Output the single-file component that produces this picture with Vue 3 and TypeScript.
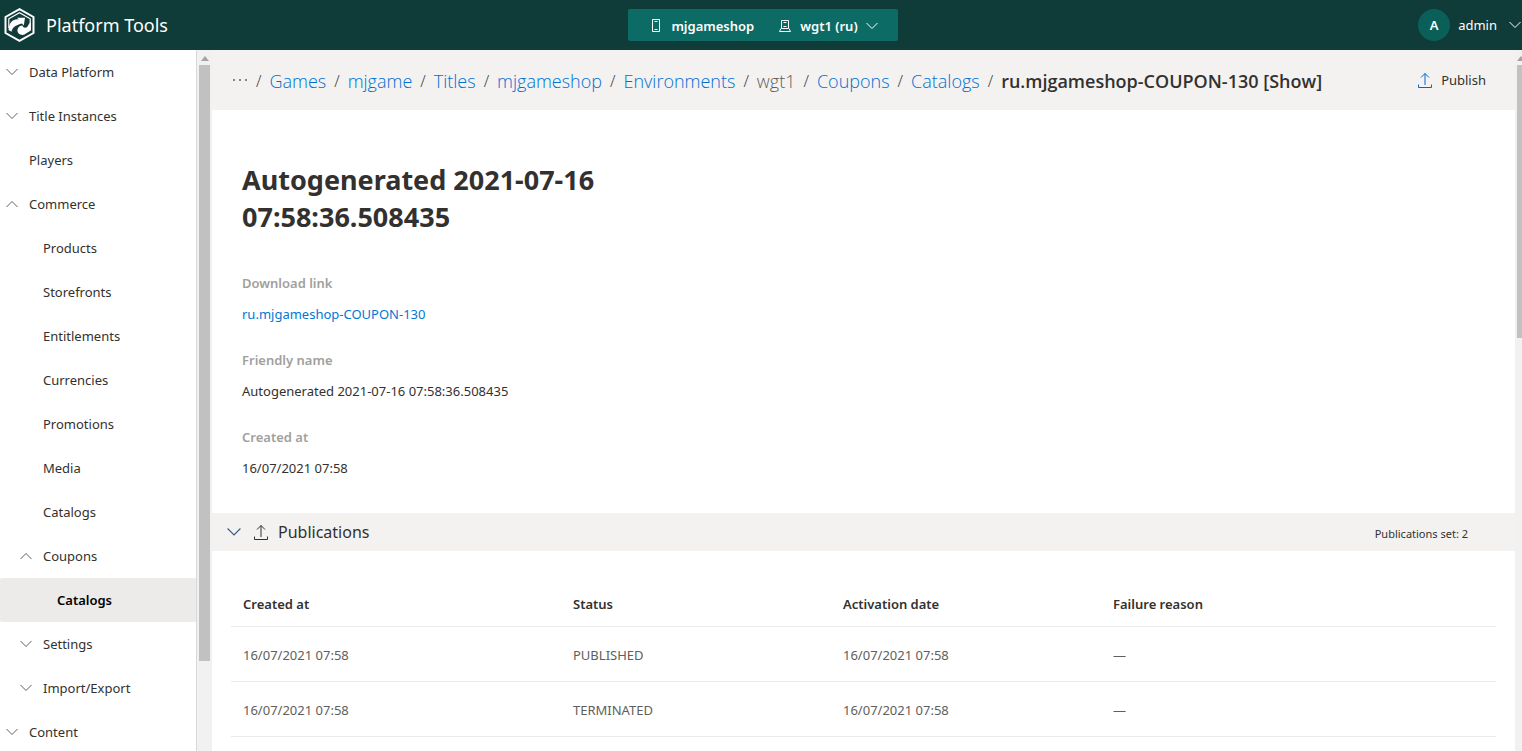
<script setup lang="ts">
interface NavItem { label: string; level: number; icon?: 'down' | 'up'; active?: boolean }
interface Crumb { label: string; kind: 'link' | 'muted' | 'current' }
interface Publication { created: string; status: string; activation: string; failure: string }

const nav: NavItem[] = [
  { label: 'Data Platform', level: 0, icon: 'down' },
  { label: 'Title Instances', level: 0, icon: 'down' },
  { label: 'Players', level: 0 },
  { label: 'Commerce', level: 0, icon: 'up' },
  { label: 'Products', level: 1 },
  { label: 'Storefronts', level: 1 },
  { label: 'Entitlements', level: 1 },
  { label: 'Currencies', level: 1 },
  { label: 'Promotions', level: 1 },
  { label: 'Media', level: 1 },
  { label: 'Catalogs', level: 1 },
  { label: 'Coupons', level: 1, icon: 'up' },
  { label: 'Catalogs', level: 2, active: true },
  { label: 'Settings', level: 1, icon: 'down' },
  { label: 'Import/Export', level: 1, icon: 'down' },
  { label: 'Content', level: 0, icon: 'down' },
]

const crumbs: Crumb[] = [
  { label: 'Games', kind: 'link' },
  { label: 'mjgame', kind: 'link' },
  { label: 'Titles', kind: 'link' },
  { label: 'mjgameshop', kind: 'link' },
  { label: 'Environments', kind: 'link' },
  { label: 'wgt1', kind: 'muted' },
  { label: 'Coupons', kind: 'link' },
  { label: 'Catalogs', kind: 'link' },
  { label: 'ru.mjgameshop-COUPON-130 [Show]', kind: 'current' },
]

const fields = [
  { label: 'Download link', value: 'ru.mjgameshop-COUPON-130', link: true },
  { label: 'Friendly name', value: 'Autogenerated 2021-07-16 07:58:36.508435', link: false },
  { label: 'Created at', value: '16/07/2021 07:58', link: false },
]

const columns = ['Created at', 'Status', 'Activation date', 'Failure reason']
const publications: Publication[] = [
  { created: '16/07/2021 07:58', status: 'PUBLISHED', activation: '16/07/2021 07:58', failure: '—' },
  { created: '16/07/2021 07:58', status: 'TERMINATED', activation: '16/07/2021 07:58', failure: '—' },
]
</script>

<template>
  <div class="shell">
    <header class="topbar">
      <div class="brand">
        <svg class="logo" viewBox="0 0 32 34" aria-hidden="true">
          <path d="M15.500 1.200 29.500 9v16L15.500 32.800 1.500 25V9Z" fill="none" stroke="#fff" stroke-width="2" />
          <path d="M4.800 20V10.800L15.500 4.800 26.200 10.800V22" fill="none" stroke="#fff" stroke-width="1.200" />
          <path d="M4.500 22C5 14.500 9.500 10.500 15 11.500L13 9.800 21 9.800 19.800 17.500 18 15.500C12.500 17 8.500 18.500 7.500 23.800Z" fill="#fff" />
          <path d="M26.800 14V22.500L20 26.800C15.500 27.500 13 24.500 13.500 21.500 14 19 16.500 17.500 18.500 17.500 19 20 22 20.500 23.500 18.500 24.500 17 25 15.500 26.800 14Z" fill="#fff" />
        </svg>
        <span class="brand-name">Platform Tools</span>
      </div>
      <button type="button" class="context">
        <svg class="ctx-icon" viewBox="0 0 14 14" aria-hidden="true">
          <path d="M3.500.5h7v12h-7zM5.500 2.500h3M5.500 10.500h3" fill="none" stroke="currentColor" />
        </svg>
        <span class="ctx-name">mjgameshop</span>
        <svg class="ctx-icon" viewBox="0 0 14 14" aria-hidden="true">
          <path d="M3.500 9.500v-8h7v8M5.500 3.500h3M5.500 7.500h3M3.500 9.500h7M3 9.500 1.500 12.500h11l-1.500-3" fill="none" stroke="currentColor" />
        </svg>
        <span>wgt1 (ru)</span>
        <svg class="chev" viewBox="0 0 12 12" aria-hidden="true"><path d="m.5 3 5.500 5.500L11.500 3" /></svg>
      </button>
      <button type="button" class="account">
        <span class="avatar">A</span>
        <span>admin</span>
        <svg class="chev" viewBox="0 0 12 12" aria-hidden="true"><path d="m.5 3 5.500 5.500L11.500 3" /></svg>
      </button>
    </header>

    <div class="body">
      <nav class="sidebar" aria-label="Main">
        <a
          v-for="(item, i) in nav"
          :key="i"
          href="#"
          class="nav-item"
          :class="['level-' + item.level, { active: item.active }]"
        >
          <span class="nav-icon">
            <svg v-if="item.icon" class="chev" :class="{ up: item.icon === 'up' }" viewBox="0 0 12 12" aria-hidden="true">
              <path d="m.5 3 5.500 5.500L11.500 3" />
            </svg>
          </span>
          {{ item.label }}
        </a>
      </nav>
      <div class="rail rail-left" aria-hidden="true">
        <span class="arrow"></span>
        <span class="thumb"></span>
      </div>

      <main class="content">
        <div class="crumbbar">
          <nav class="crumbs" aria-label="Breadcrumb">
            <button type="button" class="more" aria-label="More">
              <svg viewBox="0 0 16 16" aria-hidden="true"><path d="M1 6h2v2H1zM7 6h2v2H7zM13 6h2v2h-2z" fill="#8a8886" /></svg>
            </button>
            <template v-for="c in crumbs" :key="c.label">
              <span class="slash">/</span>
              <a v-if="c.kind === 'link'" href="#">{{ c.label }}</a>
              <span v-else :class="c.kind">{{ c.label }}</span>
            </template>
          </nav>
          <button type="button" class="publish">
            <svg class="upload" viewBox="0 0 16 16" aria-hidden="true"><path d="M1.500 12.500v3h13v-3M8 13V1.500M4 5.500l4-4 4 4" /></svg>
            Publish
          </button>
        </div>

        <section class="details">
          <h1>Autogenerated 2021-07-16 07:58:36.508435</h1>
          <dl>
            <template v-for="f in fields" :key="f.label">
              <dt>{{ f.label }}</dt>
              <dd><a v-if="f.link" href="#">{{ f.value }}</a><template v-else>{{ f.value }}</template></dd>
            </template>
          </dl>
        </section>

        <section>
          <div class="section-head">
            <button type="button" class="toggle">
              <svg class="chev" viewBox="0 0 12 12" aria-hidden="true"><path d="m.5 3 5.500 5.500L11.500 3" /></svg>
              <svg class="upload" viewBox="0 0 16 16" aria-hidden="true"><path d="M1.500 12.500v3h13v-3M8 13V1.500M4 5.500l4-4 4 4" /></svg>
              <span>Publications</span>
            </button>
            <span class="count">Publications set: 2</span>
          </div>
          <div class="table-wrap">
            <table>
              <thead>
                <tr><th v-for="c in columns" :key="c" scope="col">{{ c }}</th></tr>
              </thead>
              <tbody>
                <tr v-for="p in publications" :key="p.status">
                  <td>{{ p.created }}</td>
                  <td>{{ p.status }}</td>
                  <td>{{ p.activation }}</td>
                  <td>{{ p.failure }}</td>
                </tr>
              </tbody>
            </table>
          </div>
        </section>
      </main>
      <div class="rail rail-right" aria-hidden="true">
        <span class="arrow"></span>
        <span class="thumb"></span>
      </div>
    </div>
  </div>
</template>

<style>
body {
  margin: 0;
  overflow: hidden;
}
</style>

<style scoped>
.shell {
  display: flex;
  flex-direction: column;
  height: 100vh;
  background: #fff;
  color: #323130;
  font: 13px/20px "Noto Sans", "Open Sans", sans-serif;
}
button {
  display: flex;
  align-items: center;
  border: 0;
  padding: 0;
  background: none;
  color: inherit;
  font: inherit;
}
a {
  color: #0078d4;
  text-decoration: none;
}
.chev {
  width: 12px;
  height: 12px;
  flex: none;
  fill: none;
  stroke: currentColor;
}
.up {
  transform: rotate(180deg);
}
.topbar {
  display: grid;
  grid-template-columns: 1fr auto 1fr;
  align-items: center;
  height: 50px;
  flex: none;
  box-sizing: border-box;
  padding-left: 4px;
  background: #0f3b38;
  color: #fff;
}
.brand {
  display: flex;
  align-items: center;
  gap: 10px;
}
.logo {
  width: 32px;
  height: 34px;
}
.brand-name {
  font-size: 18px;
  line-height: 24px;
}
.context {
  height: 32px;
  box-sizing: border-box;
  padding: 2px 20px 0 21px;
  border-radius: 2px;
  background: #0c6b64;
  font-weight: 600;
}
.ctx-icon {
  width: 14px;
  height: 14px;
  margin-right: 8px;
}
.ctx-name {
  margin-right: 24px;
}
.context .chev {
  margin-left: 8px;
}
.account {
  justify-self: end;
  padding-right: 1px;
}
.account .chev {
  margin-left: 12px;
}
.avatar {
  width: 32px;
  margin-right: 8px;
  border-radius: 50%;
  background: #0b5f59;
  font-weight: 600;
  line-height: 32px;
  text-align: center;
}
.body {
  display: flex;
  flex: 1;
  min-height: 0;
}
.sidebar {
  width: 196px;
  flex: none;
  overflow: hidden;
  border-right: 1px solid #d8d8d8;
}
.nav-item {
  display: flex;
  align-items: center;
  height: 44px;
  padding-left: 6px;
  border-radius: 2px;
  color: #323130;
}
.nav-icon {
  display: flex;
  width: 12px;
  margin-right: 11px;
  color: #605e5c;
}
.level-1 {
  padding-left: 20px;
}
.level-2 {
  padding-left: 34px;
}
.active {
  background: #edebe9;
  color: #000;
  font-weight: 600;
}
.rail {
  display: flex;
  flex-direction: column;
  align-items: center;
  flex: none;
  overflow: hidden;
  background: #f1f1f1;
}
.rail-left {
  width: 15px;
}
.rail-right {
  width: 7px;
  align-items: flex-start;
  padding-left: 2px;
  box-sizing: border-box;
}
.arrow {
  flex: none;
  margin: 6px 0 4px;
  border: 4px solid transparent;
  border-top: 0;
  border-bottom: 5px solid #a3a3a3;
}
.thumb {
  flex: none;
  width: 11px;
  height: 85%;
  background: #c1c1c1;
}
.rail-right .thumb {
  height: 39%;
}
.content {
  flex: 1;
  min-width: 0;
  overflow: hidden;
}
.crumbbar {
  display: flex;
  align-items: center;
  justify-content: space-between;
  height: 60px;
  padding: 0 29px 0 20px;
  background: #f3f2f1;
}
.crumbs {
  display: flex;
  align-items: center;
  padding-top: 2px;
  color: #605e5c;
  font: 300 18px/26px "Open Sans", "Noto Sans", sans-serif;
  white-space: nowrap;
}
.more svg {
  width: 16px;
  height: 16px;
}
.slash {
  margin: 0 8px;
  color: #323130;
  font-size: 16px;
}
.crumbs a {
  color: #0070d0;
}
.current {
  color: #323130;
  font-weight: 600;
}
.publish {
  gap: 8px;
}
.upload {
  width: 16px;
  height: 16px;
  fill: none;
  stroke: currentColor;
}
.publish .upload {
  color: #0067d0;
}
.details {
  padding: 51px 30px 35px;
}
h1 {
  max-width: 400px;
  margin: 0 0 38px;
  font-size: 27px;
  font-weight: 700;
  line-height: 37px;
}
dl {
  margin: 0;
}
dt {
  margin-bottom: 11px;
  color: #a19f9d;
  font-weight: 600;
}
dd {
  margin: 0 0 26px;
}
dd:last-child {
  margin-bottom: 0;
}
.section-head {
  display: flex;
  align-items: center;
  justify-content: space-between;
  height: 38px;
  padding: 0 47px 0 15px;
  background: #f3f2f1;
}
.toggle {
  font-size: 16px;
  line-height: 24px;
}
.toggle .chev {
  width: 14px;
  height: 14px;
  margin-right: 12px;
  color: #3b5a86;
}
.toggle .upload {
  margin-right: 9px;
}
.count {
  padding-top: 4px;
  font-size: 11px;
}
.table-wrap {
  padding: 32px 19px 0;
}
table {
  width: 100%;
  border-collapse: collapse;
  table-layout: fixed;
}
th,
td {
  height: 52px;
  padding: 2px 12px 0;
  border-bottom: 1px solid #edebe9;
  text-align: left;
}
th {
  height: 41px;
  padding: 0 12px 2px;
  font-weight: 600;
}
th:first-child {
  width: 306px;
}
th:nth-child(2),
th:nth-child(3) {
  width: 246px;
}
td {
  color: #605e5c;
}
</style>
